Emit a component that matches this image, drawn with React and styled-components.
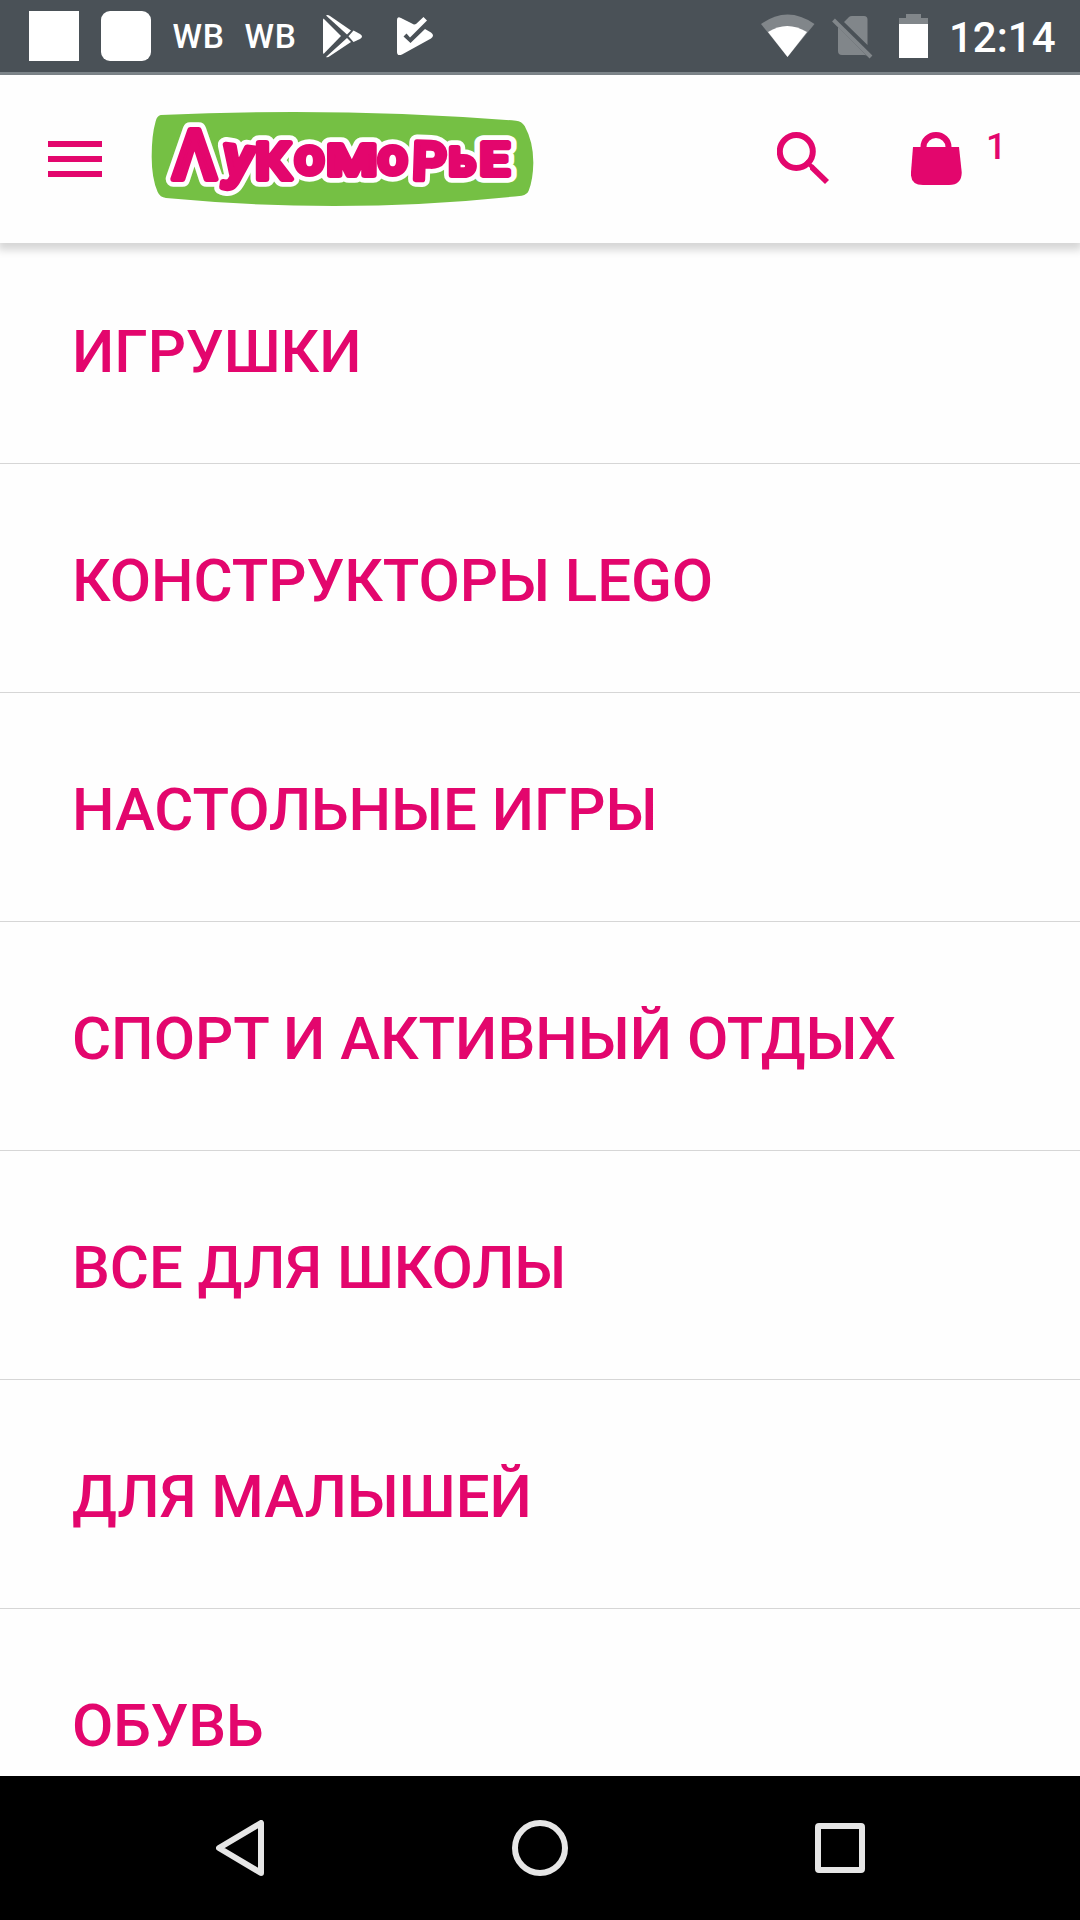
import React from "react"
import styled, { createGlobalStyle } from "styled-components"

const PINK = "#e3066d"

const GlobalStyle = createGlobalStyle`
    * {
        box-sizing: border-box;
    }
    body {
        margin: 0;
        background: #fefefe;
        font-family: Roboto, "Noto Sans", sans-serif;
    }
    svg {
        display: block;
        flex: none;
    }
`

const Screen = styled.div`
    width: 1080px;
    height: 1920px;
    display: flex;
    flex-direction: column;
    overflow: hidden;
`

const StatusBar = styled.div`
    height: 75px;
    flex: none;
    display: flex;
    justify-content: space-between;
    padding: 11px 25px 0 29px;
    background: #4a5157;
    border-bottom: 3px solid #7e868b;
    color: white;
`

const Notifications = styled.div`
    display: flex;
    height: 50px;
    gap: 22px;
`

const AppBadge = styled.div`
    width: 50px;
    height: 50px;
    background: white;
    border-radius: ${(props) => props.$radius || 0}px;
`

const AppName = styled.div`
    width: 50px;
    padding-left: 1px;
    font-size: 33.5px;
    font-weight: 500;
    line-height: 51px;
    letter-spacing: 0.6px;
    display: flex;
    justify-content: center;
`

const SystemIcons = styled.div`
    display: flex;
    height: 50px;
`

const Clock = styled.div`
    width: 106px;
    margin-left: 18px;
    font-size: 42px;
    font-weight: 500;
    line-height: 53px;
    white-space: nowrap;
`

const Header = styled.header`
    height: 168px;
    flex: none;
    display: flex;
    align-items: center;
    padding-left: 48px;
    background: #fefefe;
    box-shadow: 0 5px 8px 2px rgba(0, 0, 0, 0.16);
    z-index: 1;
`

const Burger = styled.div`
    width: 54px;
    display: flex;
    flex-direction: column;
    gap: 9px;
`

const Bar = styled.span`
    height: 6px;
    background: ${PINK};
`

const Logo = styled.svg`
    margin-left: 48px;
    overflow: visible;
    font-family: Roboto, "Noto Sans", sans-serif;
    font-weight: 500;
`

const Actions = styled.div`
    display: flex;
    align-items: center;
    gap: 82px;
    margin-left: 241px;
    color: ${PINK};
`

const Cart = styled.div`
    display: flex;
    align-items: center;
    gap: 24px;
`

const CartCount = styled.span`
    padding-bottom: 25px;
    font-size: 36px;
    line-height: 36px;
    font-weight: 500;
`

const Menu = styled.nav`
    flex: 1;
    min-height: 0;
    overflow: hidden;
`

const MenuItem = styled.div`
    height: 229px;
    display: flex;
    align-items: center;
    padding: 4px 0 0 72px;
    border-bottom: 1px solid #d6d6d6;
    color: ${PINK};
    font-size: 60px;
    font-weight: 500;
    letter-spacing: -0.06px;
    white-space: nowrap;
    &:first-child {
        margin-top: -8px;
    }
`

const NavBar = styled.div`
    height: 144px;
    flex: none;
    display: flex;
    justify-content: center;
    align-items: center;
    background: black;
`

const NavButton = styled.div`
    width: 300px;
    display: flex;
    justify-content: center;
`

const categories = [
    "ИГРУШКИ",
    "КОНСТРУКТОРЫ LEGO",
    "НАСТОЛЬНЫЕ ИГРЫ",
    "СПОРТ И АКТИВНЫЙ ОТДЫХ",
    "ВСЕ ДЛЯ ШКОЛЫ",
    "ДЛЯ МАЛЫШЕЙ",
    "ОБУВЬ",
]

// every letter of the wordmark has its own size, width and baseline
// the first one is the pointed form of Л
const letters = [
    { ch: "Λ", x: 97, y: 237, size: 207, w: 134, rot: 0 },
    { ch: "у", x: 243, y: 225, size: 174, w: 90, rot: 8 },
    { ch: "К", x: 345, y: 236, size: 148, w: 107, rot: 0 },
    { ch: "о", x: 464, y: 221, size: 148, w: 88, rot: 0 },
    { ch: "м", x: 557, y: 226, size: 172, w: 157, rot: 0 },
    { ch: "о", x: 714, y: 222, size: 148, w: 88, rot: 0 },
    { ch: "Р", x: 816, y: 237, size: 156, w: 100, rot: 2 },
    { ch: "ь", x: 925, y: 224, size: 149, w: 82, rot: 0 },
    { ch: "Е", x: 1019, y: 224, size: 132, w: 88, rot: 0 },
]

function Wordmark() {
    return (
        <Logo width="386" height="98" viewBox="30 30 1158 294">
            <path
                fill="#75c044"
                d="M62 45 Q600 20 1128 62 Q1145 63 1154 78 Q1180 125 1180 188 Q1179 240 1166 272 Q1162 283 1145 287 Q620 345 78 294 Q60 292 53 276 Q35 235 35 170 Q35 105 47 64 Q51 47 62 45Z"
            />
            <use href="#wordmark" stroke="white" strokeWidth="46" />
            <text id="wordmark" fill={PINK} strokeLinejoin="round">
                {letters.map((l, i) => (
                    <tspan
                        key={i}
                        x={l.x}
                        y={l.y}
                        fontSize={l.size}
                        rotate={l.rot}
                        textLength={l.w}
                        lengthAdjust="spacingAndGlyphs"
                    >
                        {l.ch}
                    </tspan>
                ))}
            </text>
            <use href="#wordmark" stroke={PINK} strokeWidth="18" />
        </Logo>
    )
}

function PlayIcon() {
    return (
        <svg width="50" height="50" viewBox="317 11 50 50" fill="white">
            <path d="M323.5 18.5 L341 36 L323.5 54 Q323 53 323 52 V20 Q323 19 323.5 18.5Z" />
            <path d="M326 15.5 Q327.5 14.5 330 16 L351 30.5 L347 34.5Z" />
            <path d="M326 57 L347 38 L351 42 L330 56 Q327.5 58 326 57Z" />
            <path d="M353.5 30.5 L360 34 Q364 36.5 360 39 L353.5 42 L348.5 36.3Z" />
        </svg>
    )
}

function InstalledIcon() {
    return (
        <svg width="50" height="50" viewBox="389 11 50 50">
            <path
                fill="white"
                d="M397 20 Q397 16 401 18 L412 23.5 Q414 25 416 24 L423.5 17 L427 20.5 L410 37.5 L406.5 33.5 L403.5 36.5 L410.5 43 L425 29 L431 32.5 Q435 35.5 431 38.5 L402 54.5 Q397 56.5 397 52Z"
            />
        </svg>
    )
}

function StatusIcons() {
    return (
        <>
            <svg width="54" height="50" viewBox="761 11 54 50">
                <path fill="#81868a" d="M761 24 Q787.5 5 814.5 24 L787.5 57Z" />
                <path fill="white" d="M768 32 Q787 20 807 32 L787.5 57Z" />
            </svg>
            <svg width="84" height="50" viewBox="815 11 84 50">
                <path
                    fill="#81868a"
                    d="M844 22 L849 17 Q850 16 852 16 H864 Q867.5 16 867.5 19.5 V45Z M838 27 L867 56 Q866 55 864 55 H842 Q838 55 838 51Z"
                />
                <path stroke="#81868a" strokeWidth="4" d="M833.5 20 L871 57" />
            </svg>
            <svg width="32" height="50" viewBox="899 11 32 50">
                <path fill="#81868a" d="M906 14 H921 V18 H928 V26 H899 V18 H906Z" />
                <path fill="white" d="M899 24 H928 V58 H899Z" />
            </svg>
        </>
    )
}

function SearchIcon() {
    return (
        <svg width="52" height="54" viewBox="777 132 52 54">
            <circle cx="796.3" cy="151.5" r="16.5" fill="none" stroke={PINK} strokeWidth="6" />
            <path fill={PINK} d="M810 168 L810 165 L813 164.5 L829 180 L825 184 L810 169.5Z" />
            <path stroke={PINK} strokeWidth="4" d="M806 161 L813 168" />
        </svg>
    )
}

function BagIcon() {
    return (
        <svg width="51" height="54" viewBox="911 132 51 54">
            <path fill="none" stroke={PINK} strokeWidth="6" d="M923.5 148 V147 A12.5 12 0 0 1 948.5 147 V148" />
            <path fill={PINK} d="M913 147 H959 L961.7 172 Q962 185 949 185 H923 Q910 185 911 172Z" />
        </svg>
    )
}

export default function App() {
    return (
        <Screen>
            <GlobalStyle />
            <StatusBar>
                <Notifications>
                    <AppBadge />
                    <AppBadge $radius={9} />
                    <AppName>WB</AppName>
                    <AppName>WB</AppName>
                    <PlayIcon />
                    <InstalledIcon />
                </Notifications>
                <SystemIcons>
                    <StatusIcons />
                    <Clock>12:14</Clock>
                </SystemIcons>
            </StatusBar>
            <Header>
                <Burger>
                    <Bar />
                    <Bar />
                    <Bar />
                </Burger>
                <Wordmark />
                <Actions>
                    <SearchIcon />
                    <Cart>
                        <BagIcon />
                        <CartCount>1</CartCount>
                    </Cart>
                </Actions>
            </Header>
            <Menu>
                {categories.map((name) => (
                    <MenuItem key={name}>{name}</MenuItem>
                ))}
            </Menu>
            <NavBar>
                <NavButton>
                    <svg width="48" height="56" viewBox="0 0 48 56">
                        <path d="M3 28 L45 3 V53Z" fill="none" stroke="#e6e6e6" strokeWidth="6" strokeLinejoin="round" />
                    </svg>
                </NavButton>
                <NavButton>
                    <svg width="56" height="56" viewBox="0 0 56 56">
                        <circle cx="28" cy="28" r="25" fill="none" stroke="#e6e6e6" strokeWidth="6" />
                    </svg>
                </NavButton>
                <NavButton>
                    <svg width="50" height="50" viewBox="0 0 50 50">
                        <rect x="3" y="3" width="44" height="44" rx="1" fill="none" stroke="#e6e6e6" strokeWidth="6" strokeLinejoin="round" />
                    </svg>
                </NavButton>
            </NavBar>
        </Screen>
    )
}
